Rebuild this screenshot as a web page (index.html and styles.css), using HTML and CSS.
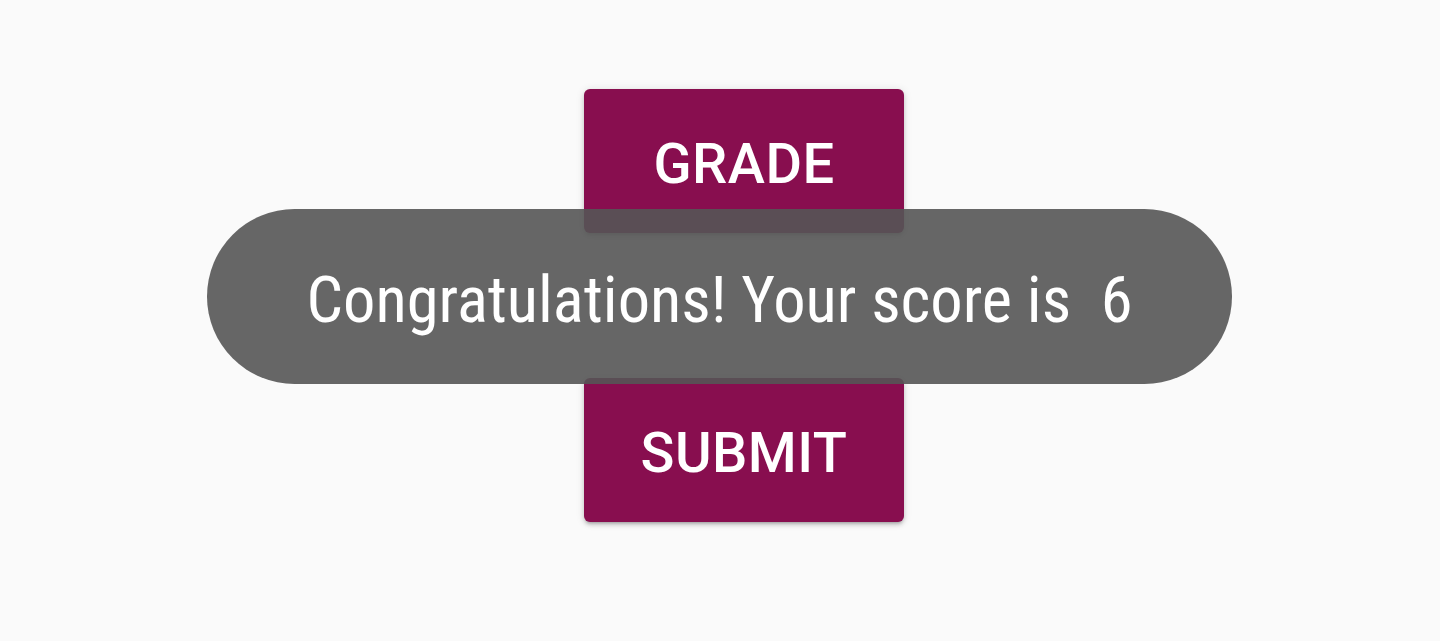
FILE: index.html
```html
<!DOCTYPE html>
<html>
<head>
<meta charset="utf-8">
<link rel="stylesheet" href="styles.css">
</head>
<body>
<main class="screen">
  <div class="actions">
    <button class="btn">GRADE</button>
    <button class="btn">SUBMIT</button>
  </div>
  <div class="toast"><span class="toast-text">Congratulations! Your score is &nbsp;6</span></div>
</main>
</body>
</html>
```
FILE: styles.css
```css
html, body {
  margin: 0;
  padding: 0;
  background: #fafafa;
}
.screen {
  position: relative;
  width: 1440px;
  height: 641px;
  overflow: hidden;
}
.actions {
  display: flex;
  flex-direction: column;
  align-items: center;
  gap: 145px;
  padding-top: 89px;
  padding-left: 48px;
}
.btn {
  width: 320px;
  height: 144px;
  border: none;
  border-radius: 6px;
  background: #880e4f;
  color: #ffffff;
  font-family: Roboto, "Noto Sans", sans-serif;
  font-weight: 500;
  font-size: 56px;
  letter-spacing: 0.008em;
  padding: 6px 0 0 0;
  box-shadow: 0 3px 3px -2px rgba(0,0,0,0.2), 0 3px 4px 0 rgba(0,0,0,0.14), 0 1px 8px 0 rgba(0,0,0,0.12);
}
.toast {
  position: absolute;
  left: 207px;
  top: 209px;
  width: 1025px;
  height: 175px;
  border-radius: 88px;
  background: rgba(85,85,85,0.9);
  display: flex;
  align-items: center;
  justify-content: center;
}
.toast-text {
  color: #ffffff;
  font-family: Roboto, sans-serif;
  font-stretch: 75%;
  font-size: 64.5px;
  font-weight: 400;
  white-space: pre;
  padding-top: 6px;
}
```
